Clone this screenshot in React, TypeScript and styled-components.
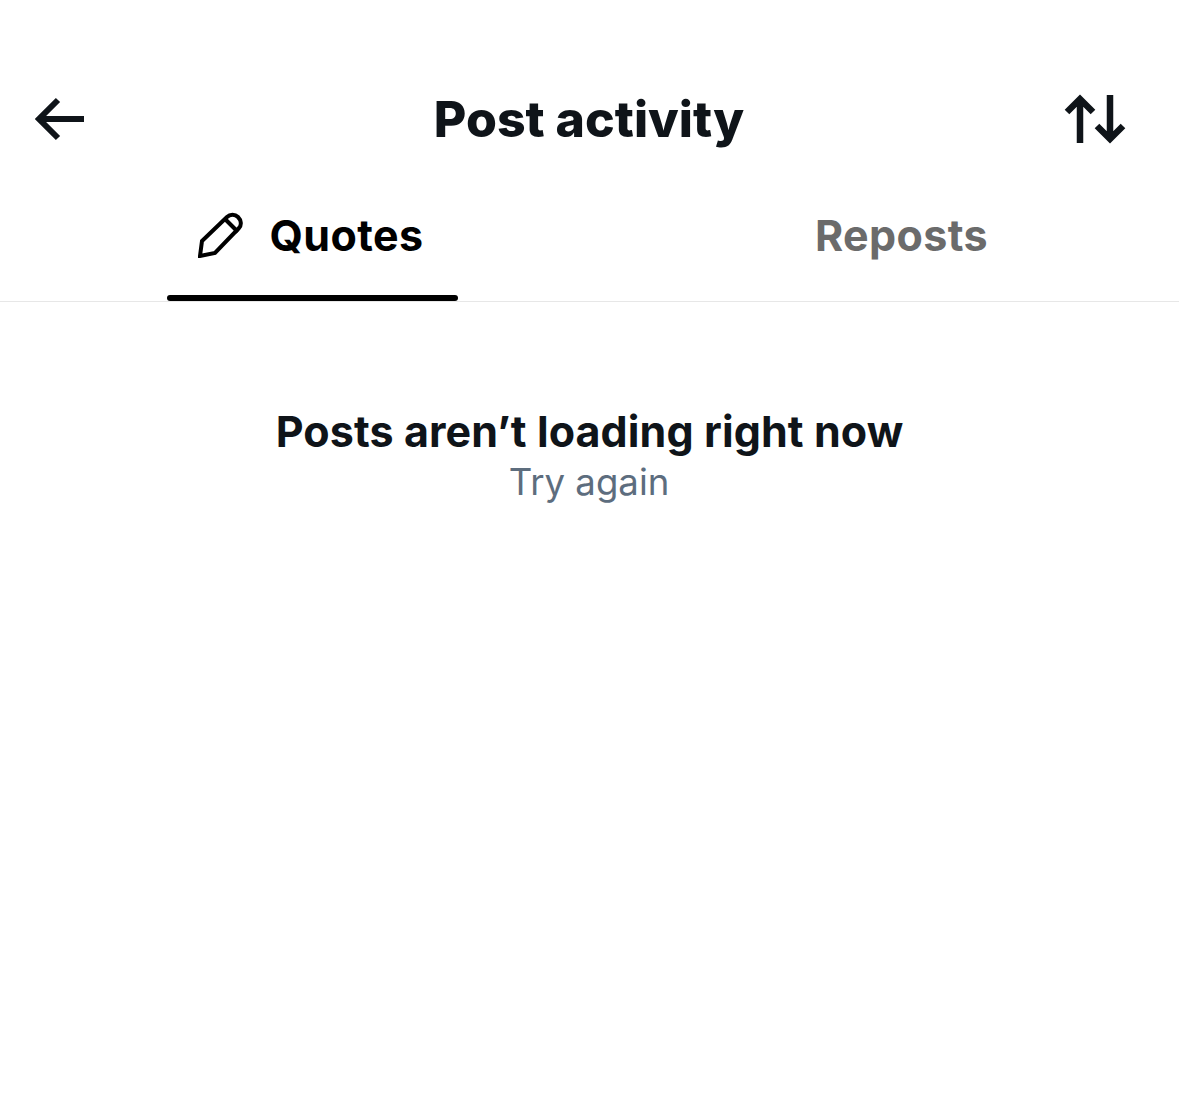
import React from 'react';
import styled, { createGlobalStyle } from 'styled-components';

const GlobalStyle = createGlobalStyle`
  html, body {
    margin: 0;
    padding: 0;
    background: #fff;
  }
  body {
    font-family: Inter, "Liberation Sans", sans-serif;
  }
`;

const Page = styled.div`
  width: 1179px;
  height: 1099px;
  background: #fff;
  display: flex;
  flex-direction: column;
  overflow: hidden;
`;

const Header = styled.header`
  height: 100px;
  margin-top: 69px;
  display: grid;
  grid-template-columns: 1fr auto 1fr;
  align-items: center;
  padding: 0 32px;
`;

const HeaderTitle = styled.h1`
  margin: 0 0 0 -1px;
  font-size: 50px;
  font-weight: 800;
  color: #0f1419;
`;

const IconButton = styled.div<{ $end?: boolean }>`
  display: flex;
  line-height: 0;
  justify-content: ${p => (p.$end ? 'flex-end' : 'flex-start')};
  margin-right: ${p => (p.$end ? '21px' : '0')};
`;

const Tabs = styled.nav`
  display: grid;
  grid-template-columns: 589px 589px;
  height: 132px;
  padding-left: 18px;
  border-bottom: 1px solid #e7e7e7;
`;

const Tab = styled.div<{ $active?: boolean }>`
  position: relative;
  display: flex;
  align-items: center;
  justify-content: center;
  gap: 26px;
  padding-right: ${p => (p.$active ? '4px' : '0')};
  font-size: 43px;
  font-weight: 700;
  letter-spacing: 0.4px;
  color: ${p => (p.$active ? '#000' : '#6b6b6b')};
`;

const Underline = styled.span`
  position: absolute;
  left: 149px;
  bottom: 0;
  width: 291px;
  height: 6px;
  border-radius: 3px;
  background: #000;
`;

const Message = styled.section`
  display: flex;
  flex-direction: column;
  align-items: center;
  padding-top: 103px;
`;

const MessageTitle = styled.div`
  font-size: 43px;
  font-weight: 700;
  letter-spacing: 0.1px;
  color: #0f1419;
`;

const Retry = styled.div`
  font-size: 36.6px;
  line-height: 46px;
  margin-top: 2px;
  margin-right: 1px;
  color: #5d6d7e;
`;

export default function App() {
  return (
    <Page>
      <GlobalStyle />
      <Header>
        <IconButton>
          <svg width="54" height="48" viewBox="0 0 54 48" fill="none" stroke="#0f1419" strokeWidth="6">
            <path d="M52 24H7M26 5L7 24l19 19" />
          </svg>
        </IconButton>
        <HeaderTitle>Post activity</HeaderTitle>
        <IconButton $end>
          <svg width="62" height="50" viewBox="0 0 62 50" fill="none" stroke="#0f1419" strokeWidth="6.5">
            <path d="M16 49V5M3 18L16 5l13 13M46 1v44M33 32l13 13 13-13" />
          </svg>
        </IconButton>
      </Header>
      <Tabs>
        <Tab $active>
          <svg width="46" height="46" viewBox="0 0 46 46" fill="none" stroke="#000" strokeWidth="4" strokeLinejoin="miter">
            <path d="M2 44l2-15L29 5c3-3 8-3 11 0s4 8 1 11L17 41z" />
            <path d="M27 7l13 13" />
          </svg>
          Quotes
          <Underline />
        </Tab>
        <Tab>Reposts</Tab>
      </Tabs>
      <Message>
        <MessageTitle>Posts aren’t loading right now</MessageTitle>
        <Retry>Try again</Retry>
      </Message>
    </Page>
  );
}
